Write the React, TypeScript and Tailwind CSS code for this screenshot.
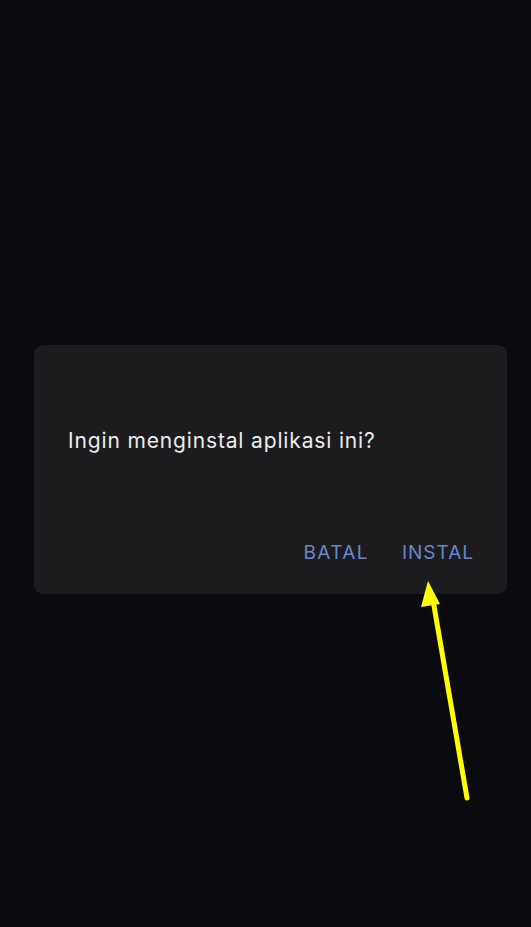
export default function App() {
  return (
    <div
      className="relative min-h-[927px] w-full overflow-hidden bg-[#0b0b0f]"
      style={{ fontFamily: 'Inter, "Noto Sans", sans-serif' }}
    >
      <div className="pt-[345px] pl-[34px]">
        {/* Dialog */}
        <div className="w-[473px] rounded-[9px] bg-[#1c1c1f] pl-[34px] pr-[33px] pt-[82px] pb-[29px]">
          <p className="text-[21px] leading-[28px] tracking-[0.85px] text-[#ececec]">Ingin menginstal aplikasi ini?</p>
          <div className="mt-[86px] flex justify-end gap-[33px]">
            <button className="text-[19px] leading-[24px] tracking-[1.4px] text-[#6b87cb]">BATAL</button>
            <button className="text-[19px] leading-[24px] tracking-[1px] text-[#6b87cb]">INSTAL</button>
          </div>
        </div>
      </div>

      {/* Pointer arrow */}
      <svg className="absolute left-0 top-0" width="531" height="927" viewBox="0 0 531 927">
        <line x1="467" y1="798" x2="433" y2="600" stroke="#ffff00" strokeWidth="5" strokeLinecap="round" />
        <polygon points="428,581 421,607 440,604" fill="#ffff00" />
      </svg>
    </div>
  );
}
